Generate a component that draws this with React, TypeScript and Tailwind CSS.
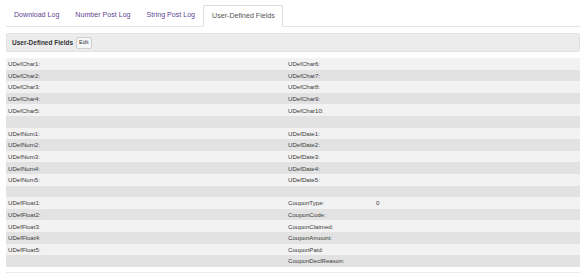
import React from "react";

const rows: [string, string, string, string][] = [
  ["UDefChar1:", "", "UDefChar6:", ""],
  ["UDefChar2:", "", "UDefChar7:", ""],
  ["UDefChar3:", "", "UDefChar8:", ""],
  ["UDefChar4:", "", "UDefChar9:", ""],
  ["UDefChar5:", "", "UDefChar10:", ""],
  ["", "", "", ""],
  ["UDefNum1:", "", "UDefDate1:", ""],
  ["UDefNum2:", "", "UDefDate2:", ""],
  ["UDefNum3:", "", "UDefDate3:", ""],
  ["UDefNum4:", "", "UDefDate4:", ""],
  ["UDefNum5:", "", "UDefDate5:", ""],
  ["", "", "", ""],
  ["UDefFloat1:", "", "CouponType:", "0"],
  ["UDefFloat2:", "", "CouponCode:", ""],
  ["UDefFloat3:", "", "CouponClaimed:", ""],
  ["UDefFloat4:", "", "CouponAmount:", ""],
  ["UDefFloat5:", "", "CouponPaid:", ""],
  ["", "", "CouponDeclReason:", ""],
];

export default function App() {
  const tabs = ["Download Log", "Number Post Log", "String Post Log"];
  return (
    <div
      className="w-[587px] h-[276px] bg-white px-[6px] text-[#333] overflow-hidden"
      style={{ fontFamily: '"Liberation Sans", Arial, sans-serif' }}
    >
      <div className="flex items-end pt-[5px] h-[27px] border-b border-[#e4e4e4] w-[574px]">
        {tabs.map((t) => (
          <div
            key={t}
            className="h-[21px] flex items-center px-[8px] text-[7.1px] text-[#5f3f93]"
          >
            {t}
          </div>
        ))}
        <div className="h-[22px] -mb-px flex items-center pl-[8px] pr-[7px] text-[7.1px] text-[#555] bg-white border border-[#dcdcdc] border-b-white rounded-t-[2px]">
          User-Defined Fields
        </div>
      </div>
      <div className="mt-[6px] h-[19px] w-[574px] bg-[#ececec] border border-[#e2e2e2] rounded-[2px] flex items-center pl-[5px]">
        <span className="text-[6.5px] font-bold text-[#333]">User-Defined Fields</span>
        <span className="ml-[3px] h-[12px] px-[2px] flex items-center text-[5.5px] text-[#333] bg-[#f6f6f6] border border-[#cfcfcf] rounded-[2px]">
          Edit
        </span>
      </div>
      <div className="mt-[6px] w-[574px]">
        {rows.map((r, i) => (
          <div
            key={i}
            className={`grid grid-cols-[88px_192px_88px_1fr] h-[11.6px] items-center text-[6.1px] text-[#3a3a3a] pl-[2px] ${
              i % 2 === 0 ? "bg-[#f2f2f2]" : "bg-[#e2e2e2]"
            }`}
          >
            <span>{r[0]}</span>
            <span>{r[1]}</span>
            <span>{r[2]}</span>
            <span>{r[3]}</span>
          </div>
        ))}
      </div>
      <div className="mt-[5px] w-[574px] border-b border-[#eaeaea]" />
    </div>
  );
}
